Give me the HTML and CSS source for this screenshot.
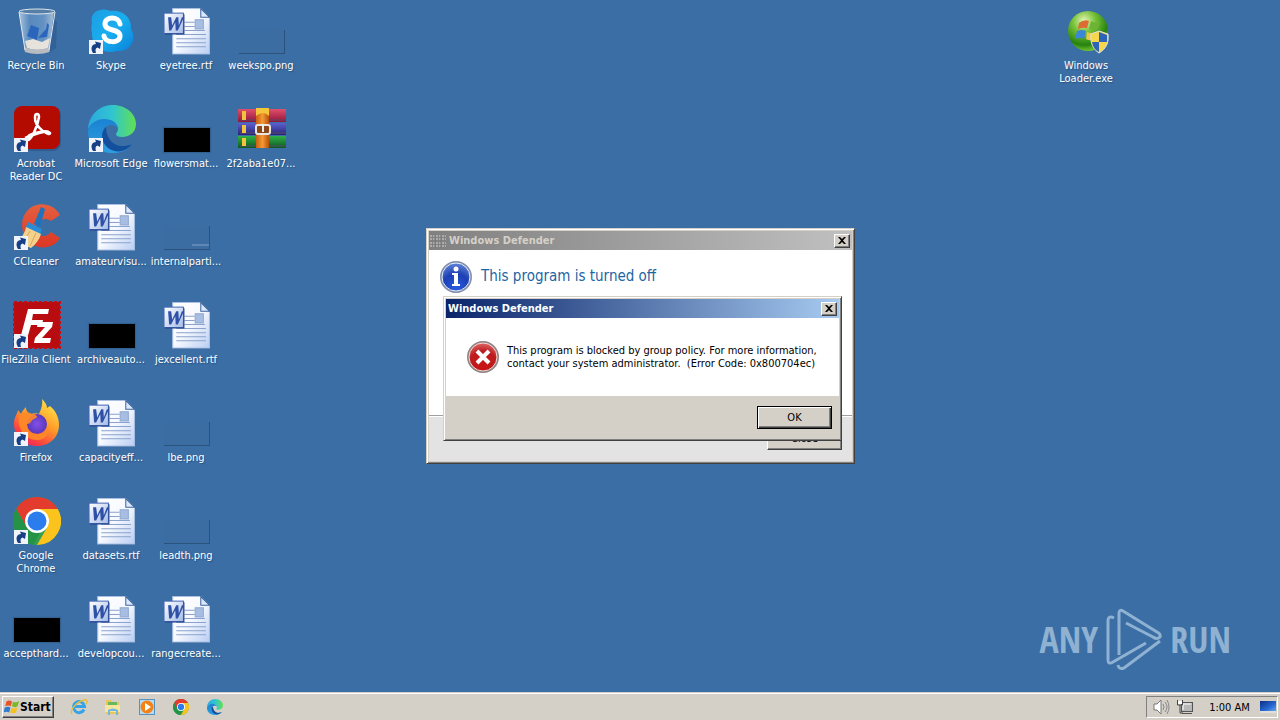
FILE: index.html
```html
<!DOCTYPE html>
<html lang="en">
<head>
<meta charset="utf-8">
<title>Desktop</title>
<link rel="stylesheet" href="styles.css">
</head>
<body>
<svg class="defs" aria-hidden="true">
  <defs>
    <linearGradient id="paper" x1="0" y1="0" x2="1" y2="1"><stop offset="0" stop-color="#fff"/><stop offset=".5" stop-color="#f6f9ff"/><stop offset="1" stop-color="#b9cdf3"/></linearGradient>
    <linearGradient id="tile" x1="0" y1="0" x2="1" y2="1"><stop offset="0" stop-color="#fff"/><stop offset="1" stop-color="#a5bce8"/></linearGradient>
    <linearGradient id="edgeTop" x1="0" y1="0" x2="1" y2="0"><stop offset="0" stop-color="#2ba7e0"/><stop offset=".5" stop-color="#30c5d0"/><stop offset="1" stop-color="#62e052"/></linearGradient>
    <linearGradient id="edgeLow" x1="0" y1="0" x2="0" y2="1"><stop offset="0" stop-color="#1b82d2"/><stop offset="1" stop-color="#2d9fe0"/></linearGradient>
    <linearGradient id="skype" x1="0" y1="0" x2="1" y2="1"><stop offset="0" stop-color="#1d9fe2"/><stop offset=".5" stop-color="#18aef0"/><stop offset="1" stop-color="#0a80d8"/></linearGradient>
    <linearGradient id="glass" x1="0" y1="0" x2="1" y2="0"><stop offset="0" stop-color="#c4d8ea"/><stop offset=".3" stop-color="#5f90c4"/><stop offset=".7" stop-color="#6d9aca"/><stop offset="1" stop-color="#c4d4e4"/></linearGradient>
    <linearGradient id="fox" x1=".8" y1="0" x2=".2" y2="1"><stop offset="0" stop-color="#ffe84a"/><stop offset=".45" stop-color="#ff9a28"/><stop offset=".8" stop-color="#fb4040"/><stop offset="1" stop-color="#e82070"/></linearGradient>
    <radialGradient id="foxGlobe"><stop offset="0" stop-color="#8350e8"/><stop offset="1" stop-color="#5a38bc"/></radialGradient>
    <linearGradient id="cc" x1="0" y1="0" x2="0" y2="1"><stop offset="0" stop-color="#e5603f"/><stop offset="1" stop-color="#dc3625"/></linearGradient>
    <radialGradient id="green" cx=".4" cy=".25" r=".8"><stop offset="0" stop-color="#e6f7b8"/><stop offset=".35" stop-color="#79c23a"/><stop offset=".75" stop-color="#25820f"/><stop offset="1" stop-color="#86d63a"/></radialGradient>
    <radialGradient id="infoFill" cx=".5" cy=".85" r=".9"><stop offset="0" stop-color="#2a5be0"/><stop offset=".5" stop-color="#1c3fb4"/><stop offset="1" stop-color="#6f93dc"/></radialGradient>
    <radialGradient id="errFill" cx=".5" cy=".8" r=".9"><stop offset="0" stop-color="#c81414"/><stop offset=".55" stop-color="#bd1d20"/><stop offset="1" stop-color="#ee8c86"/></radialGradient>
    <linearGradient id="bookR" x1="0" y1="0" x2="0" y2="1"><stop offset="0" stop-color="#e0506c"/><stop offset="1" stop-color="#93143a"/></linearGradient>
    <linearGradient id="bookB" x1="0" y1="0" x2="0" y2="1"><stop offset="0" stop-color="#5c60d0"/><stop offset="1" stop-color="#2a2478"/></linearGradient>
    <linearGradient id="bookG" x1="0" y1="0" x2="0" y2="1"><stop offset="0" stop-color="#30b048"/><stop offset="1" stop-color="#0c5a20"/></linearGradient>
    <linearGradient id="strap" x1="0" y1="0" x2="1" y2="0"><stop offset="0" stop-color="#c86010"/><stop offset=".5" stop-color="#f39a35"/><stop offset="1" stop-color="#b8500c"/></linearGradient>
    <linearGradient id="screen" x1="0" y1="0" x2="1" y2="1"><stop offset="0" stop-color="#0b2c86"/><stop offset=".6" stop-color="#2668d0"/><stop offset="1" stop-color="#64a4f0"/></linearGradient>

    <symbol id="shortcut" viewBox="0 0 14 14"><rect width="14" height="14" fill="#f0f4fa"/><path d="M4 13C1 8 3 4 7 4L6 1.500l6 1.500-1 6-2.500-1.500C6.500 8 6 10 7 13z" fill="#173f86"/></symbol>
    <symbol id="word" viewBox="0 -1 47 47">
      <path d="M10 1.500h27l9 9V46H10z" fill="#264e86" opacity=".5"/>
      <path d="M9.500.500H37l8.500 9V45h-36z" fill="url(#paper)" stroke="#a9bfe4"/>
      <path d="M37 .500v8.500h8.500z" fill="#dce8fb" stroke="#3f659e"/>
      <path d="M21 14h10M21 18h10M21 22h20M13 26h29M13 30h29M13 34h29M13 38h29" stroke="#8aa2cc"/>
      <rect x="31.500" y="11.500" width="8" height="9" fill="#a8bde2" stroke="#90a8d0"/>
      <rect x="1" y="5" width="19" height="20" fill="url(#tile)" stroke="#4768b6"/>
      <path d="M20.500 6v19.500H2" fill="none" stroke="#23428e"/>
      <path d="M4 9h4l1 8 4-8h2l.500 8 3-8h-2 4l-6 13h-2l-.500-8-4 8H6L5 9z" fill="#2e50a6"/>
    </symbol>
    <symbol id="chrome" viewBox="0 0 48 48">
      <circle cx="24" cy="24" r="24" fill="#34a04c"/>
      <path d="M24 24L3.200 12A24 24 0 0 1 44.800 12z" fill="#e33b2e"/>
      <path d="M24 12h20.800A24 24 0 0 1 24 48l10.400-18z" fill="#fcc31c"/>
      <path d="M3.200 12l10.400 18L24 12z" fill="#e33b2e"/><path d="M3.200 12l10.400 18A12 12 0 0 0 24 36l3 0-6.500 11.800A24 24 0 0 1 3.200 12z" fill="#259345"/>
      <circle cx="24" cy="24" r="12" fill="#fff"/><circle cx="24" cy="24" r="9.500" fill="#2b7ced"/>
    </symbol>
    <symbol id="edge" viewBox="0 0 48 48">
      <path d="M0 24C1 10 11 0 25 0c13 0 23 9 23 19 0 8-6 13-14 13-4 0-6-1-6-3 0-1 2-2 2-5 0-5-5-9-12-9C9 15 2 19 0 24z" fill="url(#edgeTop)"/>
      <path d="M0 25c2-7 9-11 16-11 8 0 14 4 14 10-1-3-4-4-7-4-6 0-9 6-7 12 3 8 12 13 22 10 3-1 5-3 6-3-5 7-12 9-19 9C10 48-1 38 0 25z" fill="url(#edgeLow)"/>
      <path d="M18 22c-6 5-5 15 2 21 6 4 14 5 20 0 2-1 4-4 4-4-8 4-18 2-22-4-3-4-4-9-4-13z" fill="#134f9c"/>
    </symbol>
    <symbol id="flag" viewBox="0 0 20 20">
      <path d="M3 3c3-2 5-1 7 0L8.500 9C6 8 4 8 1.500 9z" fill="#e8542a"/><path d="M11 3.500c3 1 5 1 8-1L17 9c-3 2-5 1-7 .500z" fill="#7bb829"/>
      <path d="M1 10.500c3-1 5-1 7 0L6.500 17c-2-1-4-2-7 0z" fill="#2e7cd0"/><path d="M9.500 11c2 1 4 1 7 0L15 17c-3 1-5 1-7.500 0z" fill="#f8c01c"/>
    </symbol>
    <symbol id="cross" viewBox="0 0 8 7"><path d="M0 0h2l2 2 2-2h2L5 3.500 8 7H6L4 5 2 7H0l3-3.500z" fill="#000"/></symbol>
  </defs>
</svg>

<main class="desktop">
  <ul class="icons">
    <li class="item"><span class="pic"><svg viewBox="0 0 48 48"><path d="M36 46l7-5 1-26-4-4z" fill="#254d80" opacity=".4"/><path d="M6 4h35l-5 40q-12 4-24 0z" fill="url(#glass)" opacity=".8"/><path d="M14 29l4-11 8 3-2 12zM25 31l8-9 1-6 2 2-2 12z" fill="#2c66bc"/><path d="M12 34l8-2 9 3 8-4-2 10q-10 4-21 0z" fill="#e5e3dc"/><path d="M11 40q13 5 26 0l-.500 5q-12 4-24.500 0z" fill="#b8bcc0"/><ellipse cx="24" cy="4.500" rx="18" ry="2.500" fill="#557fa8" stroke="#e0e6ea"/><path d="M6 5l6 38M42 5l-6 38" stroke="#e1e9f0" fill="none"/></svg></span><span class="label">Recycle Bin</span></li>
    <li class="item"><span class="pic"><svg viewBox="0 0 48 48"><path d="M4 16C1 4 14 0 22 4c12-2 22 6 21 18 6 10 0 23-14 22C15 48 3 38 4 26c-1-3-1-7 0-10z" fill="url(#skype)"/><path d="M32 17c-1-8-15-8-15 0 0 8 15 4 15 12 0 8-15 7-16 0" fill="none" stroke="#fff" stroke-width="5" stroke-linecap="round"/></svg><svg class="arrow"><use href="#shortcut"/></svg></span><span class="label">Skype</span></li>
    <li class="item"><span class="pic"><svg viewBox="0 0 48 48"><rect x="2" y="2" width="46" height="44" rx="8" fill="#24426e" opacity=".4"/><rect x="1" y="1" width="46" height="43" rx="8" fill="#b30b00"/><path d="M12 33c3-1 22-9 25-5 1 4-16-5-15-16 0-4 4-4 4 0-1 8-7 22-11 23-4 0 0-5 4-6 9-3 17-4 17-1" fill="none" stroke="#fff" stroke-width="2.500"/></svg><svg class="arrow"><use href="#shortcut"/></svg></span><span class="label">Acrobat<br>Reader DC</span></li>
    <li class="item"><span class="pic"><svg><use href="#edge"/></svg><svg class="arrow"><use href="#shortcut"/></svg></span><span class="label">Microsoft Edge</span></li>
    <li class="item"><span class="pic"><svg viewBox="0 0 48 48"><path d="M47 12C41 0 23-3 14 8 5 18 9 36 20 42c10 5 22 2 27-7l-9-6c-4 6-13 5-15-1-3-8 8-16 15-10z" fill="url(#cc)"/><path d="M28 4l4 2-5 18-6-3z" fill="#1f72bc"/><path d="M15 19l14 7-2 6-15-6z" fill="#2b8bd4"/><path d="M13 24l15 7c-2 6-5 10-10 14L3 39c5-3 9-9 10-15z" fill="#f4d28e"/><path d="M17 28l-7 12M23 30l-6 13" stroke="#d9a95a"/></svg><svg class="arrow"><use href="#shortcut"/></svg></span><span class="label">CCleaner</span></li>
    <li class="item"><span class="pic"><svg><use href="#word"/></svg></span><span class="label">amateurvisu...</span></li>
    <li class="item"><span class="pic"><svg viewBox="0 0 48 48"><rect x="1" y="1" width="46" height="46" fill="#b80c10" stroke="#c01016" stroke-width="2" stroke-dasharray="3 2"/><path d="M15 8h21l-1 5H20l-1 6h11l-1 5H18l-4 14H7z" fill="#fff"/><path d="M25 21h15l-1 5-10 11h9l-1 5H21l1-5 10-11h-8z" fill="#fff"/></svg><svg class="arrow"><use href="#shortcut"/></svg></span><span class="label">FileZilla Client</span></li>
    <li class="item"><span class="pic"><i class="thumb black"></i></span><span class="label">archiveauto...</span></li>
    <li class="item"><span class="pic"><svg viewBox="0 0 48 48"><path d="M29 0c3 3 5 6 5 9l3-2c6 5 9 12 9 19 0 12-9 21-22 21S1 38 1 25c0-7 3-9 4-14l3 4c1-3 3-5 5-7 0 4 2 6 5 7 3-1 6-1 8 0 2-5 4-9 3-15z" fill="url(#fox)"/><circle cx="24" cy="25" r="10" fill="url(#foxGlobe)"/><path d="M6 16c5-3 9-3 13-1 4 0 5 2 5 3-2 2-5 2-6 5-1 1-2 2-4 2 0 7 5 10 11 10 7 0 10-5 10-10 3 8-2 16-11 16C12 41 4 30 6 16z" fill="#ff8a28" opacity=".9"/></svg><svg class="arrow"><use href="#shortcut"/></svg></span><span class="label">Firefox</span></li>
    <li class="item"><span class="pic"><svg><use href="#word"/></svg></span><span class="label">capacityeff...</span></li>
    <li class="item"><span class="pic"><svg><use href="#chrome"/></svg><svg class="arrow"><use href="#shortcut"/></svg></span><span class="label">Google<br>Chrome</span></li>
    <li class="item"><span class="pic"><svg><use href="#word"/></svg></span><span class="label">datasets.rtf</span></li>
    <li class="item"><span class="pic"><i class="thumb black"></i></span><span class="label">accepthard...</span></li>
    <li class="item"><span class="pic"><svg><use href="#word"/></svg></span><span class="label">developcou...</span></li>
    <li class="item c3 r1"><span class="pic"><svg><use href="#word"/></svg></span><span class="label">eyetree.rtf</span></li>
    <li class="item c3 r2"><span class="pic"><i class="thumb black"></i></span><span class="label">flowersmat...</span></li>
    <li class="item c3 r3"><span class="pic"><i class="thumb clear dash"></i></span><span class="label">internalparti...</span></li>
    <li class="item c3 r4"><span class="pic"><svg><use href="#word"/></svg></span><span class="label">jexcellent.rtf</span></li>
    <li class="item c3 r5"><span class="pic"><i class="thumb clear"></i></span><span class="label">lbe.png</span></li>
    <li class="item c3 r6"><span class="pic"><i class="thumb clear"></i></span><span class="label">leadth.png</span></li>
    <li class="item c3 r7"><span class="pic"><svg><use href="#word"/></svg></span><span class="label">rangecreate...</span></li>
    <li class="item c4 r1"><span class="pic"><i class="thumb clear"></i></span><span class="label">weekspo.png</span></li>
    <li class="item c4 r2"><span class="pic"><svg viewBox="0 0 48 48"><path d="M0 4h48v13H0z" fill="url(#bookR)"/><path d="M0 18h48v12H0z" fill="url(#bookB)"/><path d="M0 31h48v12H0z" fill="url(#bookG)"/><path d="M2 15h46M2 28h46M2 41h46" stroke="#5a4a68"/><path d="M4 6h4v9H4zM4 20h4v8H4zM4 33h4v8H4z" fill="#f3c53c"/><rect x="18" y="3" width="13" height="40" fill="url(#strap)"/><path d="M18 3h13v8q-6-6-13 0z" fill="#f5c53a"/><rect x="18" y="20" width="14" height="9" rx="2" fill="#8b4716" stroke="#e9e6e2" stroke-width="2"/><path d="M25 19v8" stroke="#f0eee8" stroke-width="2"/></svg></span><span class="label">2f2aba1e07...</span></li>
    <li class="item far r1"><span class="pic"><svg viewBox="0 0 48 48"><circle cx="25" cy="24" r="20" fill="url(#green)"/><path d="M16 16q5-4 10-2l-2 7q-5-1-9 1z" fill="#dc6b34"/><path d="M28 14q5 3 9 0l-2 8q-5 2-9 0z" fill="#6db434"/><path d="M14 24q5-2 9 0l-2 8q-4-2-9 0z" fill="#3c86d8"/><path d="M24 25q5 2 9 0l-2 8q-5 1-8-1z" fill="#eac844"/><path d="M28 27l8-3 9 3c1 9-2 15-9 19-6-4-9-10-8-19z" fill="#f6d64a" stroke="#dce2e4"/><path d="M36 25l8 3v7h-8zM29 35h7v10c-4-2-6-5-7-10z" fill="#2e64b8"/></svg></span><span class="label">Windows<br>Loader.exe</span></li>
  </ul>

  <div class="watermark"><span>ANY</span><svg viewBox="0 0 56 64"><path d="M8 10Q2 7 2 13V52Q2 57 7 54L40 35M13 47V5Q13 1 17 3L51 24Q55 26 54 29Q51 32 47 29L20 15M54 33L18 60Q13 62 12 57" fill="none"/></svg><span>RUN</span></div>

  <section class="window info" aria-labelledby="t1">
    <header class="title idle">
      <svg class="grip" viewBox="0 0 16 14"><path d="M0 2h16M0 5h16M0 9h16M0 12h16" stroke="#d8d8d8" stroke-dasharray="2 1"/><path d="M5 0v14M11 0v14" stroke="#777"/></svg>
      <h1 id="t1">Windows Defender</h1><button class="shut" aria-label="Close window"><svg><use href="#cross"/></svg></button>
    </header>
    <div class="info-body">
      <svg class="round" viewBox="0 0 32 32"><circle cx="16" cy="16" r="15" fill="url(#infoFill)" stroke="#8390ac" stroke-width="2"/><circle cx="16" cy="16" r="14" fill="none" stroke="#e6edf8"/><circle cx="16" cy="8" r="2.500" fill="#fff"/><path d="M12 12h6v11h2v2h-8v-2h2v-9h-2z" fill="#fff"/></svg>
      <p class="headline">This program is turned off</p>
    </div>
    <footer class="info-foot"><button class="push">Close</button></footer>
  </section>

  <section class="window alert" role="alertdialog" aria-labelledby="t2">
    <header class="title active"><h2 id="t2">Windows Defender</h2><button class="shut" aria-label="Close alert"><svg><use href="#cross"/></svg></button></header>
    <div class="alert-body">
      <svg class="round" viewBox="0 0 32 32"><circle cx="16" cy="16" r="15" fill="url(#errFill)" stroke="#8f8585" stroke-width="2"/><circle cx="16" cy="16" r="14" fill="none" stroke="#f3d9d6"/><path d="M10 10l12 12M22 10l-12 12" stroke="#fff" stroke-width="4"/></svg>
      <p>This program is blocked by group policy. For more information,<br>contact your system administrator.&nbsp; (Error Code: 0x800704ec)</p>
    </div>
    <footer class="alert-foot"><button class="push default">OK</button></footer>
  </section>
</main>

<nav class="taskbar">
  <button class="start"><svg><use href="#flag"/></svg>Start</button>
  <div class="quick">
    <button aria-label="Internet Explorer"><svg viewBox="0 0 18 18"><path d="M14 11.500a5.500 5.500 0 1 1 .500-3H5" fill="none" stroke="#35a3e6" stroke-width="3"/><path d="M2 16C-1 13 6 4 14 2c3-1 4 1 2 4" fill="none" stroke="#e8bd38" stroke-width="1.500"/></svg></button>
    <button aria-label="Explorer"><svg viewBox="0 0 18 18"><path d="M2 2h5l1 2h7v12H2z" fill="#e9c65a"/><path d="M4 4h9v3H4z" fill="#66b85c"/><path d="M1 7h15v7H1z" fill="#f8e5a0"/><path d="M4 17v-5q5-3 10 0v5h-2v-4H6v4z" fill="#70b7e4"/></svg></button>
    <button aria-label="Media Player"><svg viewBox="0 0 18 18"><rect x="1.500" y="1.500" width="15" height="15" fill="#b9d9ee" stroke="#5592c0"/><circle cx="9" cy="9" r="6.500" fill="#f08218"/><path d="M7 5l6 4-6 4z" fill="#fff"/></svg></button>
    <button aria-label="Chrome"><svg viewBox="-3 -3 54 54"><use href="#chrome" width="48" height="48"/></svg></button>
    <button aria-label="Edge"><svg viewBox="-3 -3 54 54"><use href="#edge" width="48" height="48"/></svg></button>
  </div>
  <div class="tray">
    <svg viewBox="0 0 18 18"><path d="M2 6h3l4-4v14l-4-4H2z" fill="#fff" stroke="#777"/><path d="M11 6q2 3 0 6M13 4q4 5 0 10M15 2q4 7 0 14" fill="none" stroke="#888"/></svg>
    <svg class="net" viewBox="0 0 18 18"><rect x="5.500" y="4.500" width="11" height="9" fill="#b8b8b8" stroke="#555"/><path d="M7 12V6h8" fill="none" stroke="#fff"/><path d="M6 15.500h10" stroke="#555"/><path d="M1.500 2v5h5V2M4 7v8h3" fill="none" stroke="#444"/><path d="M2 3h4v3H2z" fill="#fff"/></svg>
    <time>1:00 AM</time>
    <svg class="show" viewBox="0 0 16 14"><path d="M0 1h16v10H0z" fill="url(#screen)"/><path d="M0 12h16" stroke="#eee"/></svg>
  </div>
</nav>
</body>
</html>
```
FILE: styles.css
```css
* { box-sizing: border-box; }
body {
  margin: 0;
  height: 100vh;
  display: flex;
  flex-direction: column;
  overflow: hidden;
  background: #3a6ea5;
  font: 11px/13px "DejaVu Sans Condensed", "DejaVu Sans", "Noto Sans", sans-serif;
  color: #000;
}
h1, h2, p, ul { margin: 0; padding: 0; }
button { font: inherit; color: inherit; padding: 0; }
svg { display: block; width: 100%; height: 100%; }
.defs { position: absolute; width: 0; height: 0; }

.desktop { position: relative; flex: 1; min-height: 0; }
.icons {
  display: grid;
  grid-template-columns: repeat(auto-fill, 75px);
  grid-auto-rows: 98px;
  list-style: none;
}
.item {
  display: flex;
  flex-direction: column;
  align-items: center;
  gap: 4px;
  padding: 7px 1px 0 0;
  color: #fff;
  text-align: center;
}
.item:nth-child(odd) { grid-column: 1; }
.item:nth-child(even) { grid-column: 2; }
.item.c3 { grid-column: 3; }
.item.c4 { grid-column: 4; }
.item.far { grid-column: -4; }
.r1 { grid-row: 1; } .r2 { grid-row: 2; } .r3 { grid-row: 3; } .r4 { grid-row: 4; }
.r5 { grid-row: 5; } .r6 { grid-row: 6; } .r7 { grid-row: 7; }
.pic { position: relative; width: 48px; height: 48px; display: flex; align-items: flex-end; }
.pic .arrow { position: absolute; left: 1px; bottom: 1px; width: 14px; height: 14px; }
.label { white-space: nowrap; padding-right: 2px; text-shadow: 1px 1px 1px #2a5280; }
.thumb { display: block; width: 46px; height: 24px; margin: 0 1px 1px; }
.black { background: #000; box-shadow: 0 0 1px 1px #33618f; }
.clear { border: solid #2a527d; border-width: 0 1px 1px 0; background: #3b6ca2; }
.dash { background: linear-gradient(#5f88b4, #5f88b4) 28px 18px / 17px 2px no-repeat #3b6ca2; }

.watermark {
  position: absolute;
  right: 49px;
  bottom: 20px;
  display: flex;
  align-items: center;
  gap: 8px;
  font: 300 36px/40px "Open Sans Condensed", "Roboto Condensed", "Liberation Sans Narrow", sans-serif;
  color: #8fb1d2;
}
.watermark svg { width: 56px; height: 64px; stroke: #8fb1d2; stroke-width: 3; stroke-linejoin: round; }

.window {
  position: absolute;
  padding: 2px;
  display: flex;
  flex-direction: column;
  border: 1px solid;
  border-color: #d4d0c8 #404040 #404040 #d4d0c8;
  box-shadow: inset 1px 1px #fff, inset -1px -1px #808080;
  background: #d4d0c8;
}
.info { left: 426px; top: 228px; width: 429px; height: 236px; }
.alert { left: 443px; top: 296px; width: 399px; height: 145px; }
.title { display: flex; align-items: center; height: 19px; padding: 0 2px; gap: 3px; }
.title h1, .title h2 { flex: 1; font-size: 11px; line-height: 13px; font-weight: bold; color: #fff; }
.idle { background: linear-gradient(90deg, #808080, #c0c0c0); }
.idle h1 { color: #d4d0c8; }
.active { background: linear-gradient(90deg, #0a246a, #a6caf0); }
.grip { width: 16px; height: 14px; margin-left: -1px; }
.shut {
  width: 16px;
  height: 14px;
  display: grid;
  place-items: center;
  background: #d4d0c8;
  border: 1px solid;
  border-color: #fff #404040 #404040 #fff;
  box-shadow: inset -1px -1px #808080;
}
.shut svg { width: 8px; height: 7px; }
.info-body { flex: 1; display: flex; gap: 9px; padding: 11px; background: #fff; }
.round { flex: none; width: 32px; height: 32px; }
.headline { font-size: 15px; line-height: 30px; color: #1c66a4; }
.info-foot {
  display: flex;
  justify-content: flex-end;
  height: 46px;
  padding: 11px 10px 0;
  background: #e3e3e3;
  border-top: 1px solid #a0a0a0;
  box-shadow: inset 0 1px #fff;
}
.alert-body { flex: 1; display: flex; align-items: center; gap: 8px; padding: 0 21px; background: #fff; white-space: nowrap; }
.alert-foot { display: flex; justify-content: flex-end; height: 42px; padding: 10px 7px 0; }
.push {
  width: 75px;
  height: 23px;
  background: #d4d0c8;
  border: 1px solid;
  border-color: #fff #404040 #404040 #fff;
  box-shadow: inset -1px -1px #808080;
}
.default { border-color: #000; box-shadow: inset 1px 1px #fff, inset -1px -1px #404040, inset -2px -2px #808080; }

.taskbar {
  display: flex;
  align-items: center;
  height: 28px;
  padding: 3px 2px 1px;
  background: #d4d0c8;
  box-shadow: inset 0 1px #d4d0c8, inset 0 2px #fff;
}
.start {
  display: flex;
  align-items: center;
  width: 52px;
  height: 22px;
  padding: 0 1px;
  font-weight: bold;
  font-size: 12px;
  background: #d4d0c8;
  border: 1px solid;
  border-color: #fff #404040 #404040 #fff;
  box-shadow: inset -1px -1px #808080;
}
.start svg { flex: none; width: 16px; height: 16px; }
.quick { display: flex; gap: 16px; margin-left: 16px; }
.quick button { width: 18px; height: 18px; border: 0; background: none; }
.tray {
  display: flex;
  align-items: center;
  margin-left: auto;
  width: 132px;
  height: 22px;
  padding: 0 1px 0 5px;
  border: 1px solid;
  border-color: #808080 #fff #fff #808080;
}
.tray svg { width: 18px; height: 18px; }
.tray .net { margin-left: 6px; }
.tray time { flex: 1; padding-left: 5px; text-align: center; white-space: nowrap; }
.tray .show { width: 16px; height: 14px; }
```
